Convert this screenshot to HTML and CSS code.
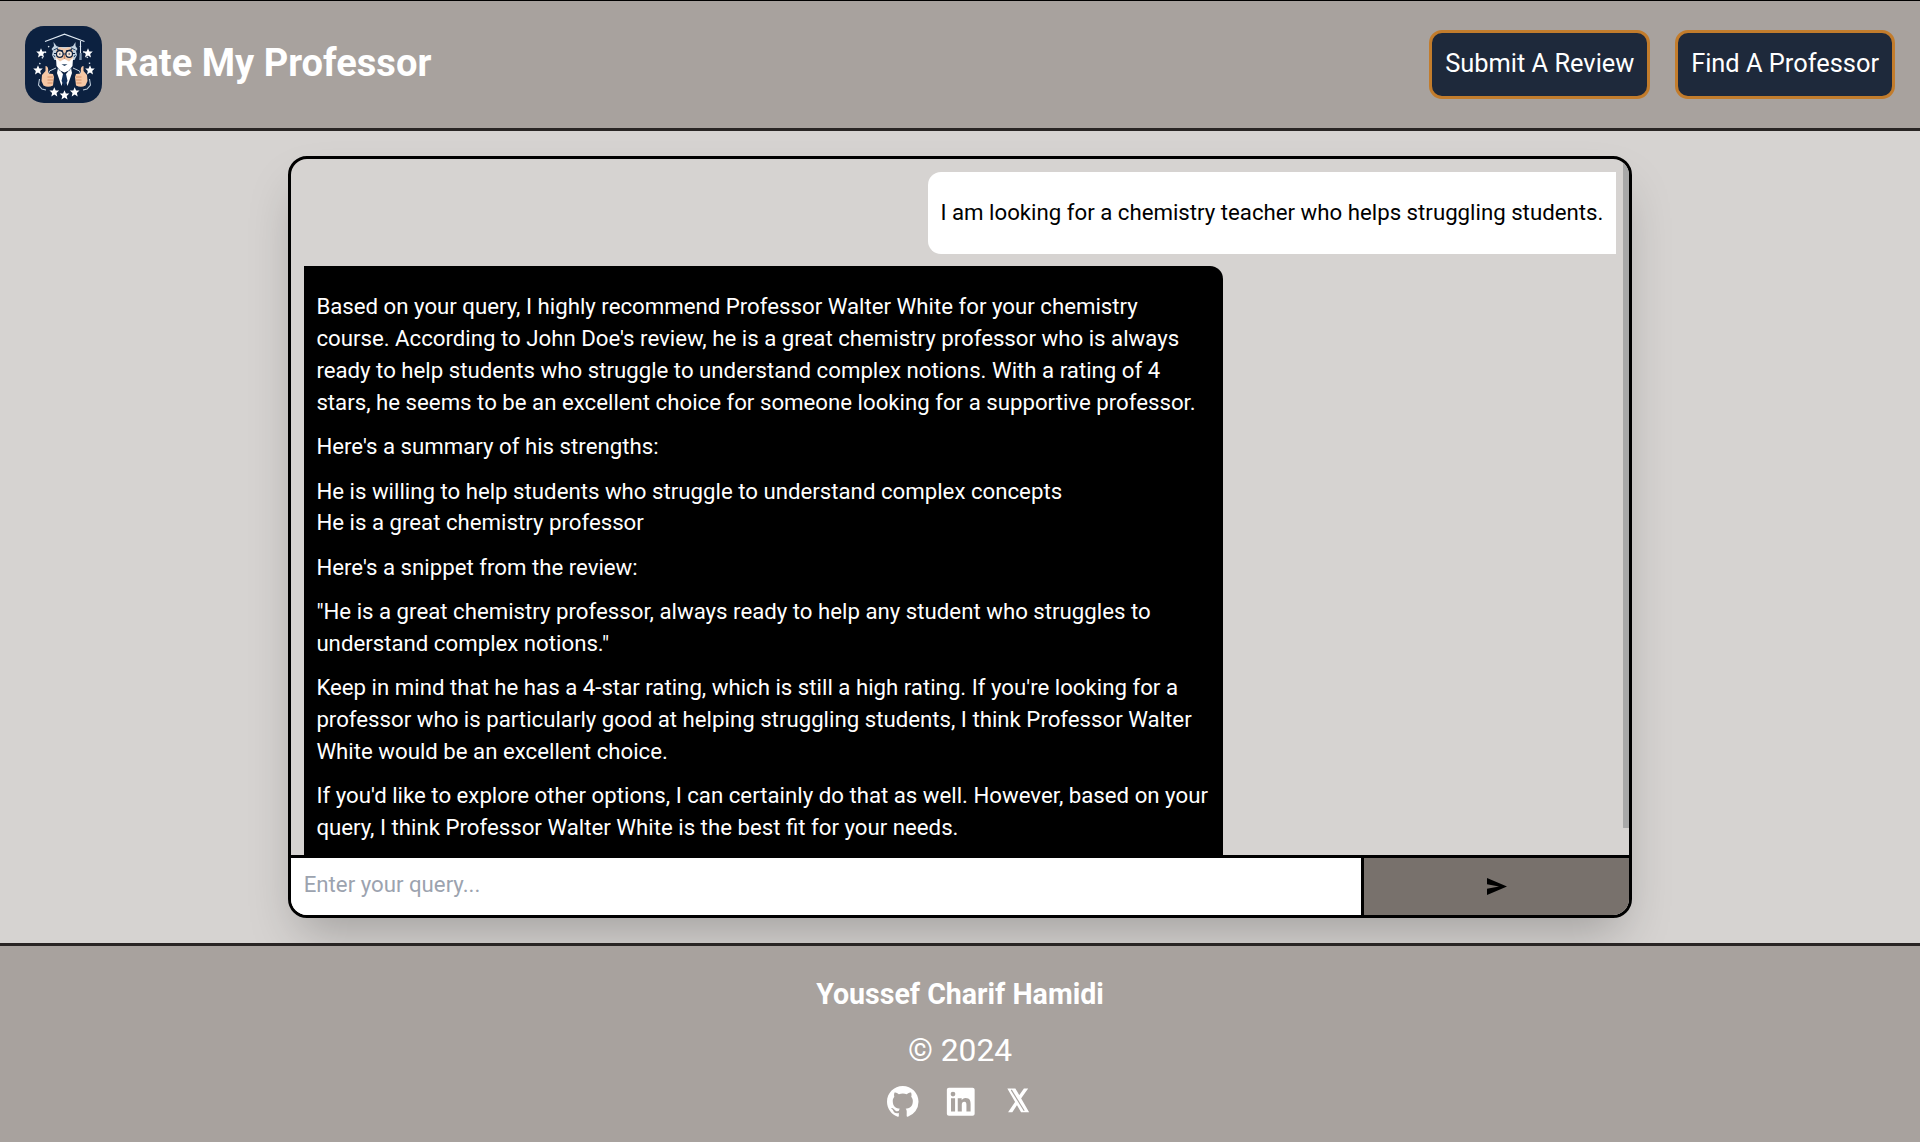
FILE: index.html
```html
<!DOCTYPE html>
<html lang="en">
<head>
<meta charset="utf-8">
<title>Rate My Professor</title>
<link rel="stylesheet" href="styles.css">
</head>
<body>
<header class="header">
  <a class="brand">
    <svg class="logo" viewBox="0 0 77 77">
      <rect width="77" height="77" fill="#0c2140"/>
      <!-- cap -->
      <path d="M20 15.500 39.500 8.200 59.500 15.500M55.500 15v18" fill="none" stroke="#dfe9f2" stroke-width="1.100"/>
      <path d="M54.700 27h2v7h-2.500z" fill="#7f95ad"/>
      <!-- dotted ring -->
      <path d="M24 20 15 36 14 46M55 20 64 34 66 46" fill="none" stroke="#dfe9f2" stroke-width="1.400" stroke-dasharray="1.400 5"/>
      <!-- suit -->
      <path d="M31 42 24.500 45 23 49M48 42 54.500 45 56 49" fill="none" stroke="#dfe9f2" stroke-width=".9"/>
      <path d="M33 42 32 47 36.500 60 39.500 50 42.500 60 47 47 46 42 41 48h-3z" fill="#fff"/>
      <path d="M38 48h3l1.500 7-3 5-3-5z" fill="#12305a"/>
      <path d="M14.500 53 13.500 59 17 63 21 64M64.500 53 65.500 59 62 63 58 64" fill="none" stroke="#bccbda" stroke-width="1.100"/>
      <!-- hair, face and beard -->
      <path d="M29.500 34 27 29 28 25 26.500 23 29 20 28.500 16 31.500 20 34 21h11l3-1 2.500-4v4l2 3-1.500 2 1 4-2.500 5z" fill="#c3d2e0"/>
      <path d="M31 24 35 21 39.500 22.500 44 21 48 24 48 34 45 38H34L31 34z" fill="#f0c9ac"/>
      <path d="M28.500 24 33 22M50.500 24 46 22M28.500 29l1.500 2M50.500 29 49 31" stroke="#24405f" stroke-width="1"/>
      <path d="M31 32 35 35.500 39.500 33 44 35.500 48 32 47.500 40 44 44.500 39.500 46.500 35 44.500 31.500 40z" fill="#fff"/>
      <path d="M36.500 38.200h6L39.500 40z" fill="#24405f"/>
      <path d="M33 42 35 45M46 42 44 45" stroke="#8aa0b5" stroke-width="1"/>
      <g fill="#f7e5d6" stroke="#0c2140" stroke-width="1.200"><circle cx="34.800" cy="28" r="3.300"/><circle cx="44.200" cy="28" r="3.300"/></g>
      <path d="M34 28h1.500M43.500 28H45M38 28h3M29 27.500h2.500M47.500 27.500H50M32 23.700l6 1.300M47 23.700 41 25" stroke="#0c2140" stroke-width="1.200"/>
      <path d="M39.500 29v4" stroke="#c98763" stroke-width="1.500"/>
      <!-- hands -->
      <g id="hand"><path d="M20.500 40q2.500 0 2.700 3.500L23 47.500l5 .5 1 3-1 8.500q-5 2.500-9.500 0L16.500 55l.5-6 3.500-4z" fill="#f6c7a4"/><path d="M22.500 51h5.500M22.500 54h5.500M22.500 57h5" stroke="#ce8358" stroke-width=".8"/></g>
      <use href="#hand" transform="matrix(-1 0 0 1 79 0)"/>
      <!-- stars -->
      <g fill="#fff">
        <path id="star" d="M0-4.800 1.400-1.600 4.800-1.400 2.200.9 3 4.400 0 2.500-3 4.400-2.200.9-4.800-1.400-1.400-1.600z" transform="translate(16 27)"/>
        <use href="#star" x="47" y="0"/><use href="#star" x="-3" y="17"/><use href="#star" x="49" y="17"/>
        <use href="#star" x="13.300" y="39"/><use href="#star" x="23.500" y="42"/><use href="#star" x="33.700" y="39"/>
      </g>
    </svg>
    <h1 class="title">Rate My Professor</h1>
  </a>
  <nav class="nav">
    <a class="nav-link">Submit A Review</a>
    <a class="nav-link">Find A Professor</a>
  </nav>
</header>
<main class="main">
  <section class="chat">
    <div class="messages">
      <div class="bubble bubble-user"><p>I am looking for a chemistry teacher who helps struggling students.</p></div>
      <div class="bubble bubble-bot">
        <p>Based on your query, I highly recommend Professor Walter White for your chemistry course. According to John Doe's review, he is a great chemistry professor who is always ready to help students who struggle to understand complex notions. With a rating of 4 stars, he seems to be an excellent choice for someone looking for a supportive professor.</p>
        <p>Here's a summary of his strengths:</p>
        <ul>
          <li>He is willing to help students who struggle to understand complex concepts</li>
          <li>He is a great chemistry professor</li>
        </ul>
        <p>Here's a snippet from the review:</p>
        <p>"He is a great chemistry professor, always ready to help any student who struggles to understand complex notions."</p>
        <p>Keep in mind that he has a 4-star rating, which is still a high rating. If you're looking for a professor who is particularly good at helping struggling students, I think Professor Walter White would be an excellent choice.</p>
        <p>If you'd like to explore other options, I can certainly do that as well. However, based on your query, I think Professor Walter White is the best fit for your needs.</p>
      </div>
      <span class="scroll-thumb"></span>
    </div>
    <form class="composer">
      <input class="query" type="text" placeholder="Enter your query...">
      <button class="send" type="button" aria-label="Send">
        <svg class="send-icon" viewBox="0 0 20 17"><path d="M0 0 20 8.500 0 17V10.800L12 8.500 0 6.200z"/></svg>
      </button>
    </form>
  </section>
</main>
<footer class="footer">
  <h2 class="author">Youssef Charif Hamidi</h2>
  <p class="copyright">© 2024</p>
  <div class="social">
    <svg class="icon" viewBox="0 0 16 16"><path d="M8 0C3.580 0 0 3.580 0 8c0 3.540 2.290 6.530 5.470 7.590.4.070.55-.17.55-.38 0-.19-.01-.82-.01-1.490-2.010.37-2.530-.49-2.690-.94-.09-.23-.48-.94-.82-1.130-.28-.15-.68-.52-.01-.53.63-.01 1.080.58 1.230.82.72 1.210 1.870.87 2.330.66.07-.52.28-.87.51-1.070-1.780-.2-3.640-.89-3.640-3.950 0-.87.31-1.590.82-2.150-.08-.2-.36-1.020.08-2.120 0 0 .67-.21 2.200.82.64-.18 1.320-.27 2-.27s1.360.09 2 .27c1.530-1.040 2.200-.82 2.200-.82.44 1.100.16 1.920.08 2.120.51.56.82 1.270.82 2.150 0 3.070-1.870 3.750-3.650 3.950.29.25.54.73.54 1.480 0 1.070-.01 1.930-.01 2.200 0 .21.15.46.55.38A8.010 8.010 0 0 0 16 8c0-4.420-3.580-8-8-8z"/></svg>
    <svg class="icon" viewBox="-1.600 -1.600 27.200 27.200"><path d="M22.200 0H1.800C.8 0 0 .8 0 1.700v20.600c0 .9.800 1.700 1.800 1.700h20.400c1 0 1.800-.8 1.800-1.700V1.700C24 .8 23.200 0 22.200 0zM7.100 20.500H3.600V9h3.500zM5.300 7.400a2.050 2.050 0 1 1 0-4.100 2.050 2.050 0 0 1 0 4.100zM20.500 20.500h-3.600v-5.600c0-1.300 0-3-1.800-3-1.900 0-2.200 1.400-2.200 2.900v5.700H9.400V9h3.400v1.600c.5-.9 1.600-1.900 3.400-1.900 3.600 0 4.300 2.400 4.300 5.500z"/></svg>
    <svg class="icon" viewBox="-5.600 -2.600 33.200 33.200"><path d="M0 0H8.500L23 25H14.500zM17.500 0H22L14.300 10.800 12.300 7.500zM8.300 14 10.300 17.500 5.300 25H.8z"/><path class="icon-slit" d="M4.200 1.500 17.800 23.500"/></svg>
  </div>
</footer>
</body>
</html>
```
FILE: styles.css
```css
* { box-sizing: border-box; margin: 0; padding: 0; }
body {
  height: 1142px;
  display: flex;
  flex-direction: column;
  overflow: hidden;
  border-top: 1px solid #000;
  background: #d6d3d1;
  color: #fff;
  font-family: Roboto, "Liberation Sans", sans-serif;
}
.header {
  height: 130px;
  flex: none;
  display: flex;
  align-items: center;
  justify-content: space-between;
  padding: 0 25px;
  background: #a8a29e;
  border-bottom: 3px solid #292524;
}
.brand { display: flex; align-items: center; gap: 12px; }
.logo { width: 77px; height: 77px; border-radius: 19px; }
.title { font-size: 38.1px; line-height: 50px; font-weight: 700; padding-bottom: 4px; }
.nav { display: flex; gap: 25.400px; }
.nav-link {
  height: 69px;
  padding: 12px 12.700px;
  border: 3px solid #c27c2c;
  border-radius: 13px;
  background: #1e293b;
  font-size: 25.4px;
  line-height: 36px;
}
.nav-link:last-child { padding-right: 13px; }
.main { height: 812px; flex: none; padding-top: 25px; display: flex; justify-content: center; align-items: flex-start; }
.chat {
  width: 1344px;
  height: 762px;
  display: flex;
  flex-direction: column;
  overflow: hidden;
  border: 3px solid #000;
  border-radius: 19px;
  box-shadow: 0 25px 50px -12px rgb(0 0 0 / .25);
}
.messages {
  position: relative;
  flex: 1;
  min-height: 0;
  overflow: hidden;
  display: flex;
  flex-direction: column;
  gap: 12px;
  padding: 12.600px 13px 12.600px 12.700px;
  font-size: 22.225px;
  line-height: 31.750px;
}
.bubble { flex: none; display: flow-root; padding: 12.500px 12.700px; }
.bubble p, .bubble ul { margin: 12.700px 0; }
.bubble-user { align-self: flex-end; background: #fff; color: #000; border-radius: 13px 0 0 13px; padding-bottom: 13px; }
.bubble-bot { align-self: flex-start; width: 919px; background: #000; border-radius: 0 13px 13px 0; }
.bubble ul { list-style: none; }
.scroll-thumb { position: absolute; top: 0; right: 0; width: 6px; height: 669px; background: #a8a8a8; }
.composer { height: 60px; flex: none; display: flex; border-top: 3px solid #000; }
.query { width: 1070px; border: 0; padding: 0 12.700px 5px; background: #fff; font: 22.225px Roboto, sans-serif; }
.query::placeholder { color: #9ca3af; opacity: 1; }
.send { flex: 1; border: 0; border-left: 3px solid #000; background: #78716c; display: flex; align-items: center; justify-content: center; }
.send-icon { width: 20px; height: 17px; }
.footer {
  position: relative;
  flex: 1;
  border-top: 3px solid #292524;
  background: #a8a29e;
  display: flex;
  flex-direction: column;
  align-items: center;
  padding-top: 27.500px;
}
.author { font-size: 28.575px; line-height: 40px; }
.copyright { font-size: 31.750px; line-height: 44px; margin-top: 15.500px; }
.social { display: flex; align-items: center; gap: 25.700px; margin-top: 13px; }
.icon { width: 31.500px; height: 31.500px; fill: #fff; }
.icon:last-child { margin-right: -.5px; }
.icon-slit { fill: none; stroke: #a8a29e; stroke-width: 1.200; }
```
